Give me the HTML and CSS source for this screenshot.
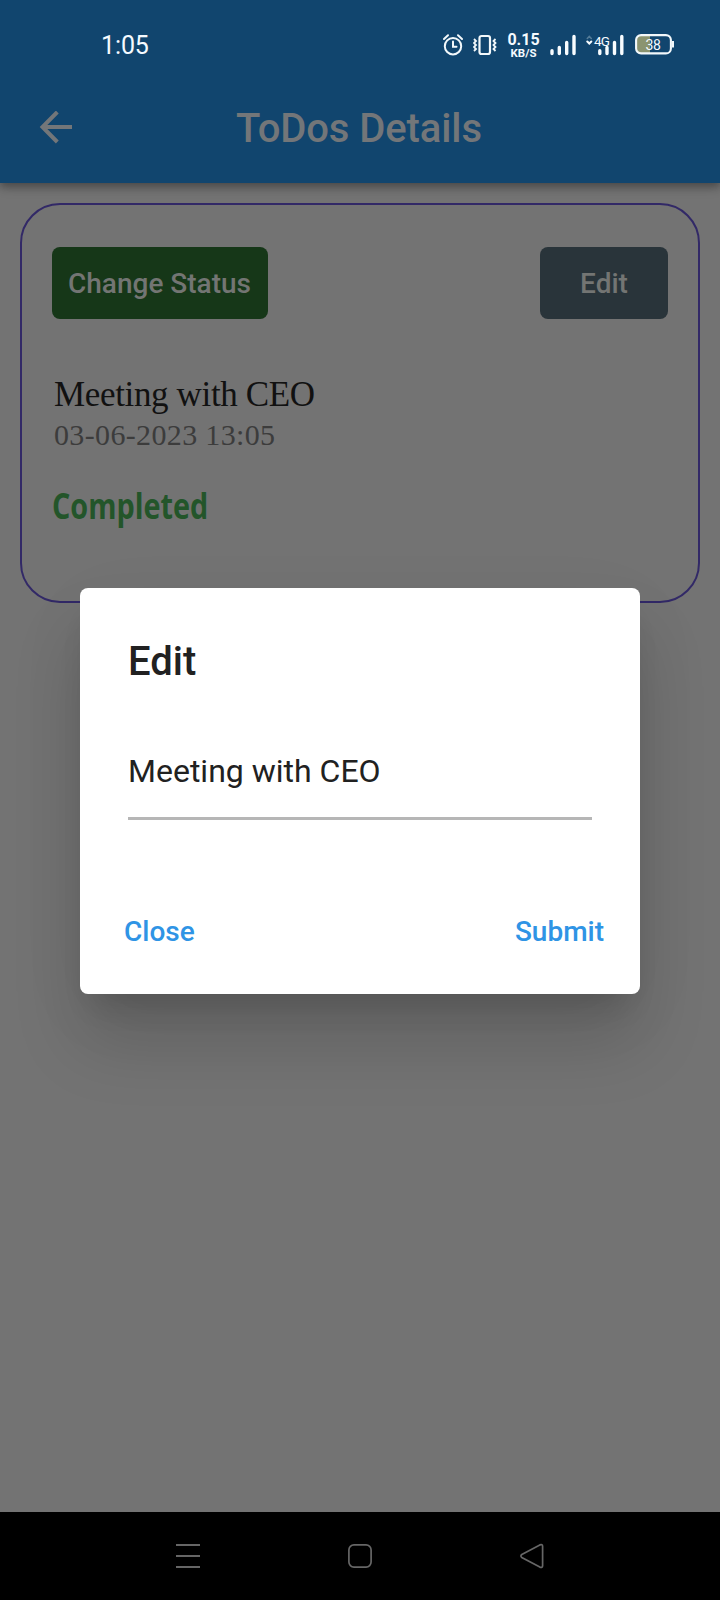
FILE: index.html
```html
<!DOCTYPE html>
<html lang="en">
<head>
<meta charset="utf-8">
<title>ToDos Details</title>
<link rel="stylesheet" href="styles.css">
</head>
<body>
<div class="screen">
  <header class="header">
    <div class="status-bar">
      <span class="clock">1:05</span>
      <div class="status-icons">
        <svg class="alarm" width="20" height="22" viewBox="0 0 20 22" fill="none" stroke="#f2f8fb" stroke-width="2"><circle cx="10" cy="12.2" r="8.2"/><path d="M10 7.5v5.2h3.5M1 5l4-3.7M19 5l-4-3.7" stroke-linecap="round"/></svg>
        <svg class="vibrate" width="24" height="22" viewBox="0 0 24 22" fill="none" stroke="#f2f8fb"><rect x="6.5" y="2" width="10.5" height="18" rx="2" stroke-width="2.2"/><path d="M1 5l2 2-2 2 2 2-2 2 2 2-2 2M22.5 5l-2 2 2 2-2 2 2 2-2 2 2 2" stroke-width="1.8"/></svg>
        <div class="speed"><span class="speed-value">0.15</span><span class="speed-unit">KB/S</span></div>
        <svg class="signal" width="26" height="22" viewBox="0 0 26 22" stroke="#f8fcff" stroke-width="3.4" stroke-linecap="round"><path d="M2 16.8v2.7M9.3 13.5v6M16.7 8.5v11M24 2.5v17"/></svg>
        <div class="mobile">
          <svg width="38" height="22" viewBox="0 0 38 22" fill="none" stroke="#f8fcff" stroke-linecap="round"><path d="M1.3 4.5l2-2 2 2" stroke="#547c98" stroke-width="1.6"/><path d="M1.3 7.5l2 2 2-2" stroke-width="2"/><path d="M13.8 16.8v2.7M21 13.5v6M28.5 8.5v11M35.8 2.5v17" stroke-width="3.4"/></svg>
          <span class="network">4G</span>
        </div>
        <div class="battery">
          <svg width="40" height="21" viewBox="0 0 40 21"><path d="M5 2h10v17H5q-3 0-3-3V5q0-3 3-3z" fill="#8b9470"/><rect x="1.1" y="1.1" width="34.8" height="18.3" rx="5" fill="none" stroke="#f2f8fb" stroke-width="2.1"/><path d="M38 7v6.5" stroke="#f2f8fb" stroke-width="2"/></svg>
          <span class="charge">38</span>
        </div>
      </div>
    </div>
    <div class="app-bar">
      <svg class="back" width="34" height="34" viewBox="0 0 34 34" fill="none" stroke="#737679" stroke-width="4"><path d="M33 16H4M18.3 1L3.5 16l14.8 15"/></svg>
      <h1 class="title">ToDos Details</h1>
    </div>
  </header>
  <main class="content">
    <section class="card">
      <div class="buttons">
        <button class="button change">Change Status</button>
        <button class="button edit">Edit</button>
      </div>
      <p class="todo-name">Meeting with CEO</p>
      <p class="todo-date">03-06-2023 13:05</p>
      <p class="todo-state">Completed</p>
    </section>
  </main>
  <nav class="nav">
    <svg width="24" height="26" viewBox="0 0 24 26" stroke="#666" stroke-width="2"><path d="M0 2h24M0 13h24M0 24h24"/></svg>
    <svg width="24" height="26" viewBox="0 0 24 26" fill="none" stroke="#666" stroke-width="1.7"><rect x=".9" y="1.9" width="22.2" height="22.2" rx="5"/></svg>
    <svg width="24" height="26" viewBox="0 0 24 26" fill="none" stroke="#666" stroke-width="1.7"><path d="M1.8 11.5L19.8 1.9q2.8-1.1 2.8 1.3v19.6q0 2.4-2.8 1.3L1.8 14.5q-1.8-1.5 0-3z"/></svg>
  </nav>
  <div class="dialog" role="dialog">
    <h2 class="dialog-title">Edit</h2>
    <div class="field">Meeting with CEO</div>
    <div class="actions"><span class="close">Close</span><span class="submit">Submit</span></div>
  </div>
</div>
</body>
</html>
```

FILE: styles.css
```css
* { box-sizing: border-box; }
body { margin: 0; font-family: Roboto, sans-serif; }
h1, h2, p { margin: 0; font-weight: 400; white-space: nowrap; }
svg { display: block; flex: none; }
.screen { position: relative; width: 720px; height: 1600px; display: flex; flex-direction: column; background: #737373; overflow: hidden; }
.header { height: 183px; flex: none; background: #11456e; box-shadow: 0 4px 8px rgba(0,0,0,.28), 0 2px 14px rgba(0,0,0,.16); z-index: 1; }
.status-bar { height: 72px; display: flex; justify-content: space-between; padding: 30px 45px 0 101px; color: #f5faff; }
.clock { font: 25px/31px Roboto, sans-serif; letter-spacing: -.1px; }
.status-icons { display: flex; align-items: flex-start; padding-top: 4px; }
.vibrate { margin-left: 10px; }
.speed { width: 31px; margin-left: 11px; display: flex; flex-direction: column; align-items: center; font-weight: 700; white-space: nowrap; }
.speed-value { font-size: 16px; line-height: 15px; margin-top: -2px; }
.speed-unit { font-size: 11.5px; line-height: 12px; }
.signal { margin-left: 11px; }
.mobile { position: relative; margin-left: 10px; }
.network { position: absolute; left: 8px; top: 0; font-size: 13.5px; line-height: 14px; font-weight: 400; background: #11456e; height: 12px; letter-spacing: -.9px; }
.battery { position: relative; margin-left: 11px; }
.charge { position: absolute; left: 0; top: 0; width: 36px; text-align: center; font-size: 14px; line-height: 22px; letter-spacing: -.3px; }
.app-bar { height: 111px; display: flex; align-items: center; padding: 0 40px 0 39px; }
.title { flex: 1; margin: 2px 35px 0 0; text-align: center; color: #737679; font-size: 40px; line-height: 48px; font-weight: 500; letter-spacing: -.1px; }
.content { flex: 1; padding: 20px; }
.card { height: 400px; border: 2px solid #322967; border-radius: 40px; padding: 42px 30px; }
.buttons { display: flex; justify-content: space-between; }
.button { height: 72px; border: 0; border-radius: 8px; padding: 2px 0 0; font: 500 28px/32px Roboto, sans-serif; color: #737573; }
.change { width: 216px; background: #163718; padding-right: 1px; }
.edit { width: 128px; background: #29343a; }
.todo-name { margin: 55px 0 0 2px; font: 35px/42px "Liberation Serif", serif; letter-spacing: -.35px; color: #111; }
.todo-date { margin: 0 0 0 2px; font: 30px/38px "Liberation Serif", serif; letter-spacing: .35px; color: #3c3c3c; }
.todo-state { margin-top: 30px; font: 700 36px/44px "Open Sans", sans-serif; transform: scaleX(.8); transform-origin: 0 50%; color: #23552a; }
.nav { height: 88px; flex: none; background: #000; display: flex; align-items: center; justify-content: space-between; padding: 0 176px; }
.dialog { position: absolute; z-index: 2; left: 80px; top: 588.4px; width: 560px; height: 406px; border-radius: 8px; background: #fff; padding: 49.6px 36px 0 48px; box-shadow: 0 22px 30px -14px rgba(0,0,0,.14), 0 48px 70px 0 rgba(0,0,0,.14), 0 18px 80px 0 rgba(0,0,0,.04); }
.dialog-title { color: #212121; font-size: 40px; line-height: 48px; font-weight: 500; }
.field { width: 464px; height: 99px; margin-top: 35px; padding-top: 31px; border-bottom: 3px solid #b6b6b6; color: #212121; font-size: 32px; line-height: 38px; }
.actions { display: flex; justify-content: space-between; margin: 96px 0 0 -4px; color: #2f94e5; font-size: 28px; line-height: 32px; font-weight: 500; }
```
